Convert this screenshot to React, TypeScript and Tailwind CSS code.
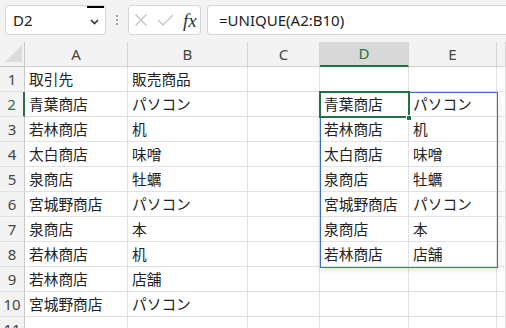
import React from 'react'

const jp = { fontFamily: '"Noto Sans CJK JP", "Noto Sans", sans-serif' }
const ui = { fontFamily: '"Noto Sans", "Liberation Sans", sans-serif' }

// column widths in px (row header first)
const cols = [
  { name: 'A', w: 'w-[103px]' },
  { name: 'B', w: 'w-[120px]' },
  { name: 'C', w: 'w-[72px]' },
  { name: 'D', w: 'w-[89px]' },
  { name: 'E', w: 'w-[88px]' },
  { name: '', w: 'flex-1' },
]

const rows: string[][] = [
  ['取引先', '販売商品', '', '', ''],
  ['青葉商店', 'パソコン', '', '青葉商店', 'パソコン'],
  ['若林商店', '机', '', '若林商店', '机'],
  ['太白商店', '味噌', '', '太白商店', '味噌'],
  ['泉商店', '牡蠣', '', '泉商店', '牡蠣'],
  ['宮城野商店', 'パソコン', '', '宮城野商店', 'パソコン'],
  ['泉商店', '本', '', '泉商店', '本'],
  ['若林商店', '机', '', '若林商店', '店舗'],
  ['若林商店', '店舗', '', '', ''],
  ['宮城野商店', 'パソコン', '', '', ''],
  ['', '', '', '', ''],
]

function FormulaBar() {
  return (
    <div className="flex h-[42px] items-start gap-0 pt-[5px] pl-[5px]">
      <div className="relative flex h-[30px] w-[101px] items-center rounded-[4px] border border-[#d5d5d5] bg-white pl-[7px]">
        <span className="text-[15px] text-[#222]" style={ui}>D2</span>
        <div className="absolute right-[1px] top-[0px] h-[1.5px] w-[17px] bg-black" />
        <svg className="absolute right-[6px] top-[13px]" width="9" height="6" viewBox="0 0 9 6">
          <path d="M1 1l3.5 3.5L8 1" fill="none" stroke="#333" strokeWidth="1.6" />
        </svg>
      </div>
      <div className="flex h-[30px] w-[22px] flex-col items-center justify-center gap-[2px]">
        <div className="h-[2px] w-[2px] rounded-full bg-[#888]" />
        <div className="h-[2px] w-[2px] rounded-full bg-[#888]" />
        <div className="h-[2px] w-[2px] rounded-full bg-[#888]" />
      </div>
      <div className="flex h-[30px] w-[73px] items-center rounded-[4px] border border-[#d5d5d5] bg-white pl-[5px]">
        <svg width="14" height="14" viewBox="0 0 14 14">
          <path d="M1.5 1.5l11 11M12.5 1.5l-11 11" stroke="#c2c2c2" strokeWidth="1.2" />
        </svg>
        <svg className="ml-[9px]" width="17" height="12" viewBox="0 0 17 12">
          <path d="M1 6l5 5L16 1" fill="none" stroke="#c2c2c2" strokeWidth="1.2" />
        </svg>
        <span className="ml-[9px] text-[19px] italic leading-none text-[#333]" style={{ fontFamily: '"Liberation Serif", serif' }}>
          fx
        </span>
      </div>
      <div className="ml-[6px] flex h-[30px] flex-1 items-center rounded-l-[4px] border border-r-0 border-[#d5d5d5] bg-white pl-[11px]">
        <span className="text-[15px] text-[#222]" style={ui}>=UNIQUE(A2:B10)</span>
      </div>
    </div>
  )
}

function HeaderRow() {
  return (
    <div className="flex h-[25px]">
      <div className="relative w-[25px] shrink-0 border-b border-r border-[#c8c8c8]">
        <svg className="absolute left-[5px] top-[3px]" width="17" height="17" viewBox="0 0 17 17">
          <path d="M17 0V17H0Z" fill="#dcdcdc" />
        </svg>
      </div>
      {cols.map((c, i) => (
        <div
          key={i}
          className={`${c.w} shrink-0 flex items-center justify-center border-r text-[15px] ${
            c.name === 'D'
              ? 'border-b-2 border-r-[#d4d4d4] border-b-[#217346] bg-[#d8d8d8] text-[#217346]'
              : 'border-b border-[#d4d4d4] text-[#444]'
          }`}
          style={ui}
        >
          {c.name}
        </div>
      ))}
    </div>
  )
}

function DataRow({ n, cells }: { n: number; cells: string[] }) {
  return (
    <div className="flex h-[25px]">
      <div
        className={`w-[25px] shrink-0 flex items-center justify-center border-b border-[#e1e1e1] bg-[#f3f3f3] text-[15px] ${
          n === 2 ? 'border-r-2 border-r-[#217346] text-[#2f6e4c]' : 'border-r border-r-[#c8c8c8] text-[#444]'
        }`}
        style={ui}
      >
        {n}
      </div>
      {cols.map((c, i) => (
        <div
          key={i}
          className={`${c.w} shrink-0 flex items-center overflow-hidden whitespace-nowrap border-b border-r border-[#e1e1e1] bg-white pl-[4px] text-[14.7px] text-[#222]`}
          style={jp}
        >
          {cells[i] ?? ''}
        </div>
      ))}
    </div>
  )
}

export default function App() {
  return (
    <div className="h-[328px] w-[506px] overflow-hidden bg-[#f3f3f3]">
      <FormulaBar />
      <div className="relative">
        <HeaderRow />
        {rows.map((r, i) => (
          <DataRow key={i} n={i + 1} cells={r} />
        ))}
        {/* spill range of D2 */}
        <div className="pointer-events-none absolute left-[320px] top-[50px] h-[176px] w-[178px] border border-[#3b6fc4] shadow-[0_2px_6px_rgba(0,0,0,0.12)]" />
        {/* active cell */}
        <div className="pointer-events-none absolute left-[319px] top-[49px] h-[27px] w-[91px] border-2 border-[#217346]" />
        <div className="pointer-events-none absolute left-[406px] top-[73px] h-[6px] w-[6px] border border-white bg-[#217346]" />
      </div>
    </div>
  )
}
